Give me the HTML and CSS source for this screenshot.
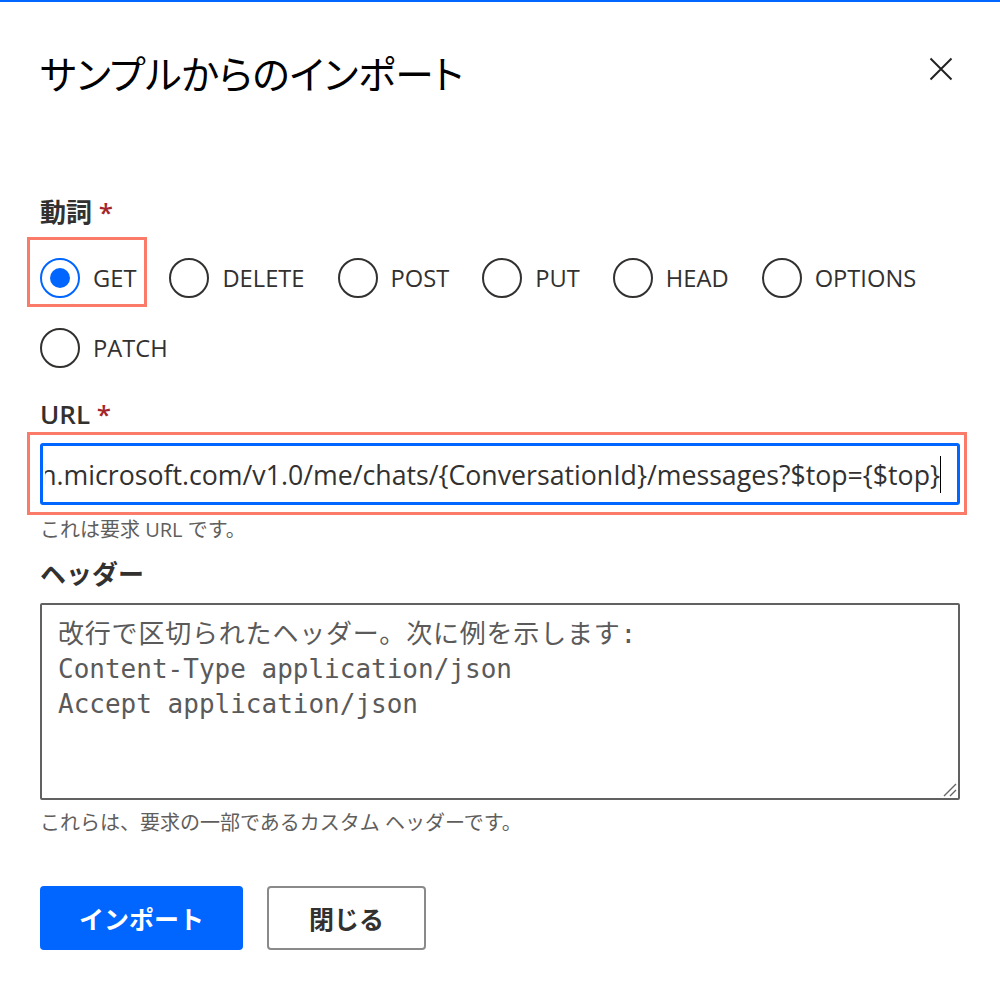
FILE: index.html
```html
<!DOCTYPE html>
<html lang="ja">
<head>
<meta charset="utf-8">
<title>サンプルからのインポート</title>
<link rel="stylesheet" href="styles.css">
</head>
<body>
<div class="topbar"></div>
<div class="dialog">
  <div class="header">
    <h1 class="title">サンプルからのインポート</h1>
    <button class="close" aria-label="閉じる">
      <svg width="24" height="24" viewBox="0 0 24 24"><path d="M1.5 1.5 L22.5 22.5 M22.5 1.5 L1.5 22.5" stroke="#222" stroke-width="2" fill="none"/></svg>
    </button>
  </div>

  <div class="label label-verb">動詞 <span class="req">*</span></div>
  <div class="radios">
    <label class="radio checked"><span class="circle"><span class="dot"></span></span><span class="rtext">GET</span><span class="mark mark-get"></span></label>
    <label class="radio"><span class="circle"></span><span class="rtext">DELETE</span></label>
    <label class="radio"><span class="circle"></span><span class="rtext">POST</span></label>
    <label class="radio"><span class="circle"></span><span class="rtext">PUT</span></label>
    <label class="radio"><span class="circle"></span><span class="rtext">HEAD</span></label>
    <label class="radio"><span class="circle"></span><span class="rtext">OPTIONS</span></label>
    <label class="radio"><span class="circle"></span><span class="rtext">PATCH</span></label>
  </div>

  <div class="label label-url">URL <span class="req">*</span></div>
  <div class="input">
    <div class="input-clip">
      <span class="input-text">https://graph.microsoft.com/v1.0/me/chats/{ConversationId}/messages?$top={$top}</span><span class="caret"></span>
    </div>
    <span class="mark mark-url"></span>
  </div>
  <div class="help help-url">これは要求 URL です。</div>

  <div class="label label-headers">ヘッダー</div>
  <div class="headers" role="textbox" aria-multiline="true">
    <div class="ph ph-jp">改行で区切られたヘッダー。次に例を示します:</div>
    <div class="ph">Content-Type application/json</div>
    <div class="ph">Accept application/json</div>
    <svg class="grip" width="14" height="14" viewBox="0 0 14 14"><path d="M1 13 L13 1 M7 13 L13 7" stroke="#666" stroke-width="1.4" fill="none"/></svg>
  </div>
  <div class="help help-headers">これらは、要求の一部であるカスタム ヘッダーです。</div>

  <div class="actions">
    <button class="btn primary">インポート</button>
    <button class="btn secondary">閉じる</button>
  </div>
</div>
</body>
</html>
```
FILE: styles.css
```css
html, body {
  margin: 0;
  padding: 0;
  background: #ffffff;
}
body {
  font-family: "Open Sans", "Noto Sans CJK JP", sans-serif;
  color: #323130;
}
.topbar {
  height: 2px;
  background: #0066ff;
}
.dialog {
  padding: 0 40px;
}
.header {
  display: flex;
  align-items: center;
  justify-content: space-between;
  margin-top: 45px;
  height: 50px;
}
.title {
  margin: 0;
  font-family: "Noto Sans CJK JP", sans-serif;
  font-weight: 400;
  font-size: 38.7px;
  line-height: 50px;
  color: #000;
  font-feature-settings: "palt";
}
.close {
  border: 0;
  background: none;
  padding: 0;
  margin-right: 7px;
  margin-bottom: 7px;
  width: 24px;
  height: 24px;
  display: flex;
}
.label {
  font-size: 26px;
  font-weight: 600;
  line-height: 36px;
  color: #323130;
}
.label-verb { margin-top: 97px; }
.label-url { margin-top: 28px; }
.label-headers { margin-top: 14px; }
.req {
  color: #a4262c;
}
.radios {
  margin-top: 28px;
  display: flex;
  flex-wrap: wrap;
  column-gap: 33px;
  row-gap: 30px;
}
.radio {
  position: relative;
  display: flex;
  align-items: center;
  height: 40px;
}
.circle {
  box-sizing: border-box;
  width: 40px;
  height: 40px;
  border: 2px solid #323130;
  border-radius: 50%;
  display: flex;
  align-items: center;
  justify-content: center;
}
.checked .circle {
  border-color: #0066ff;
}
.dot {
  width: 20px;
  height: 20px;
  border-radius: 50%;
  background: #0066ff;
}
.rtext {
  margin-left: 13px;
  font-size: 23.7px;
  line-height: 40px;
  color: #323130;
}
.mark {
  position: absolute;
  border: 3px solid #fa7b6a;
  pointer-events: none;
}
.mark-get {
  left: -13px;
  top: -21px;
  right: -11px;
  bottom: -9px;
}
.input {
  position: relative;
  margin-top: 11px;
  box-sizing: border-box;
  height: 62px;
  border: 3px solid #0066ff;
  border-radius: 3px;
  padding: 0 16px 0 2px;
}
.input-clip {
  height: 100%;
  overflow: hidden;
  display: flex;
  align-items: center;
  justify-content: flex-end;
  white-space: nowrap;
}
.input-text {
  flex-shrink: 0;
  font-size: 26.7px;
  color: #323130;
}
.caret {
  flex-shrink: 0;
  width: 1px;
  height: 37px;
  background: #000;
}
.mark-url {
  left: -16px;
  top: -14px;
  right: -10px;
  bottom: -13px;
}
.help {
  font-size: 20px;
  line-height: 24px;
  color: #605e5c;
}
.help-url { margin-top: 13px; }
.headers {
  position: relative;
  margin-top: 11px;
  box-sizing: border-box;
  width: 100%;
  height: 197px;
  border: 2px solid #616161;
  border-radius: 2px;
  padding: 12px 16px;
  font-family: "DejaVu Sans Mono", "Noto Sans CJK JP", monospace;
  font-size: 26px;
  line-height: 35px;
  color: #5a5a5a;
}
.ph {
  white-space: pre;
}
.ph-jp {
  letter-spacing: 0.8px;
}
.grip {
  position: absolute;
  right: 1px;
  bottom: 1px;
}
.help-headers { margin-top: 11px; }
.actions {
  margin-top: 51px;
  display: flex;
  gap: 24px;
}
.btn {
  box-sizing: border-box;
  height: 64px;
  border-radius: 4px;
  font-family: "Noto Sans CJK JP", sans-serif;
  font-size: 25px;
  font-weight: 700;
  cursor: pointer;
}
.primary {
  width: 203px;
  background: #0066ff;
  border: 0;
  color: #fff;
}
.secondary {
  width: 159px;
  background: #fff;
  border: 2px solid #8a8a8a;
  color: #323130;
}
```
